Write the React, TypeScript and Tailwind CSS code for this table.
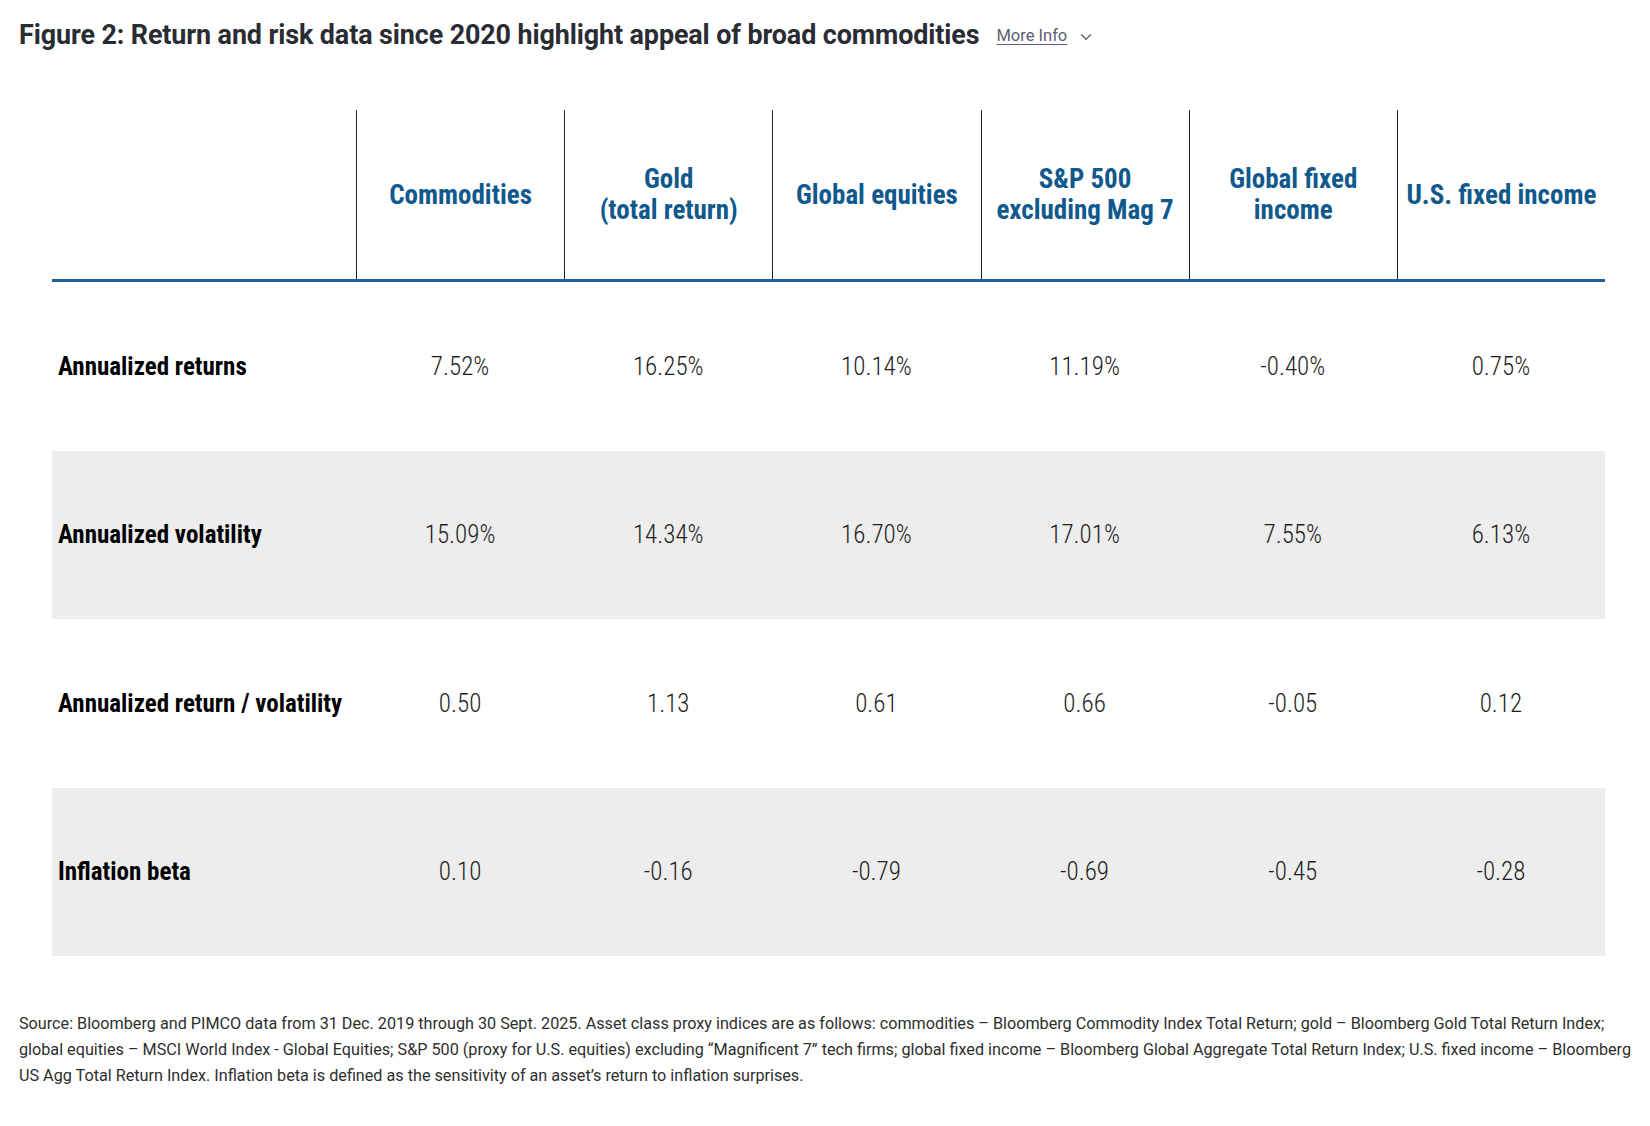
import { ChevronDown } from 'lucide-react';

const columns = [
  ['Commodities'],
  ['Gold', '(total return)'],
  ['Global equities'],
  ['S&P 500', 'excluding Mag 7'],
  ['Global fixed', 'income'],
  ['U.S. fixed income'],
];

const rows = [
  { label: 'Annualized returns', values: ['7.52%', '16.25%', '10.14%', '11.19%', '-0.40%', '0.75%'] },
  { label: 'Annualized volatility', values: ['15.09%', '14.34%', '16.70%', '17.01%', '7.55%', '6.13%'] },
  { label: 'Annualized return / volatility', values: ['0.50', '1.13', '0.61', '0.66', '-0.05', '0.12'] },
  { label: 'Inflation beta', values: ['0.10', '-0.16', '-0.79', '-0.69', '-0.45', '-0.28'] },
];

export default function App() {
  return (
    <div className="w-[1650px] h-[1126px] bg-white px-[19px] pt-[16px] font-['Roboto',sans-serif]">
      {/* Title */}
      <div className="flex items-center h-[38px]">
        <h2 className="text-[26.9px] font-bold text-[#2a2c33] leading-[38px] tracking-[-0.1px]">
          Figure 2: Return and risk data since 2020 highlight appeal of broad commodities
        </h2>
        <button className="ml-[17px] mt-[3px] flex items-center gap-[10px] text-[16.5px] text-[#5c6272]">
          <span className="underline underline-offset-[3px]">More Info</span>
          <ChevronDown className="w-[18px] h-[18px]" strokeWidth={1.75} />
        </button>
      </div>

      {/* Table */}
      <div className="ml-[33px] mt-[56px] w-[1553px] [font-stretch:condensed] font-['Roboto_Condensed','Liberation_Sans_Narrow',Roboto,sans-serif]">
        <div className="grid grid-cols-[304px_repeat(6,1fr)] h-[172px] border-b-[3px] border-[#1f6198]">
          <div />
          {columns.map((lines, i) => (
            <div key={i} className="border-l border-[#222] flex flex-col items-center justify-center text-center text-[27px] leading-[31px] font-bold text-[#10598c] pt-[1px]">
              {lines.map((l) => (
                <span key={l}>{l}</span>
              ))}
            </div>
          ))}
        </div>

        {rows.map((row, r) => (
          <div
            key={row.label}
            className={`grid grid-cols-[304px_repeat(6,1fr)] items-center h-[168.5px] ${r % 2 === 1 ? 'bg-[#ededed]' : 'bg-white'}`}
          >
            <div className="pl-[6px] text-[25px] font-bold text-black">{row.label}</div>
            {row.values.map((v, i) => (
              <div key={i} className="text-center text-[25px] font-light text-[#1e1e1e]">
                {v}
              </div>
            ))}
          </div>
        ))}
      </div>

      {/* Footnote */}
      <p className="mt-[55px] text-[16.2px] leading-[26px] text-[#2e2e2e] w-[1621px]">
        Source: Bloomberg and PIMCO data from 31 Dec. 2019 through 30 Sept. 2025. Asset class proxy indices are as follows: commodities – Bloomberg Commodity Index Total Return; gold – Bloomberg Gold Total Return Index; global equities – MSCI World Index - Global Equities; S&amp;P 500 (proxy for U.S. equities) excluding “Magnificent 7” tech firms; global fixed income – Bloomberg Global Aggregate Total Return Index; U.S. fixed income – Bloomberg US Agg Total Return Index. Inflation beta is defined as the sensitivity of an asset’s return to inflation surprises.
      </p>
    </div>
  );
}
